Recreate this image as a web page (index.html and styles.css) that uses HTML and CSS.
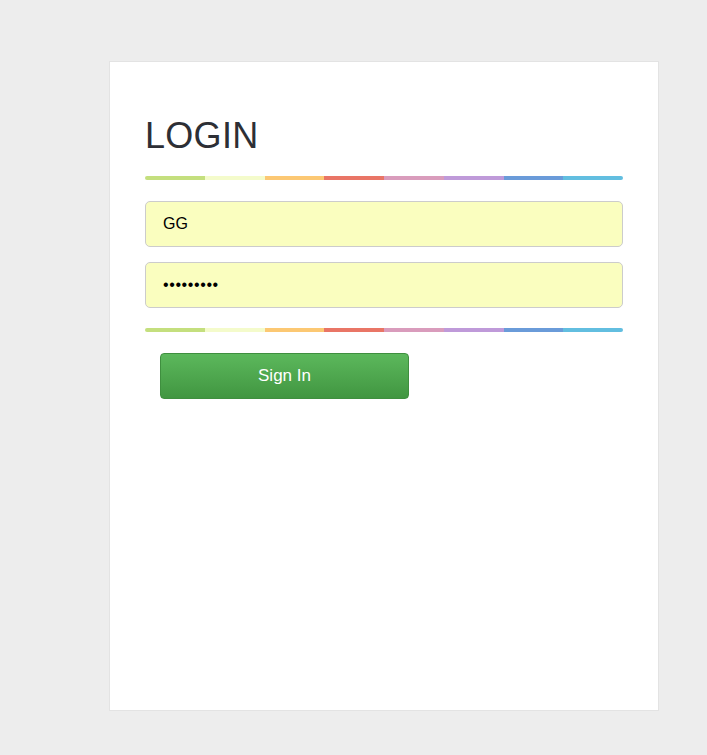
FILE: index.html
```html
<!DOCTYPE html>
<html>
<head>
<meta charset="utf-8">
<link rel="stylesheet" href="styles.css">
</head>
<body>
<div class="page">
  <div class="card">
    <h1 class="title">LOGIN</h1>
    <div class="rainbow"><span class="c1"></span><span class="c2"></span><span class="c3"></span><span class="c4"></span><span class="c5"></span><span class="c6"></span><span class="c7"></span><span class="c8"></span></div>
    <form class="form">
      <input class="field" type="text" value="GG">
      <input class="field pass" type="password" value="123456789">
    </form>
    <div class="rainbow"><span class="c1"></span><span class="c2"></span><span class="c3"></span><span class="c4"></span><span class="c5"></span><span class="c6"></span><span class="c7"></span><span class="c8"></span></div>
    <div class="actions">
      <button class="btn" type="button">Sign In</button>
    </div>
  </div>
</div>
</body>
</html>
```
FILE: styles.css
```css
html, body {
  margin: 0;
  padding: 0;
  background: #ededed;
  font-family: "Liberation Sans", Arial, sans-serif;
}
.page {
  padding: 61px 0 0 109px;
}
.card {
  box-sizing: border-box;
  width: 550px;
  height: 650px;
  background: #fff;
  border: 1px solid #e3e3e3;
  padding: 50px 35px 0 35px;
}
.title {
  margin: 0;
  font-size: 36px;
  font-weight: normal;
  color: #2d2f35;
  line-height: 48px;
  letter-spacing: 0.3px;
}
.rainbow {
  display: flex;
  height: 4px;
  border-radius: 2px;
  overflow: hidden;
  margin-top: 16px;
}
.rainbow span { flex: 1; }
.c1 { background: #c4df7e; }
.c2 { background: #f4fbcb; }
.c3 { background: #fcc873; }
.c4 { background: #e97566; }
.c5 { background: #d99cbc; }
.c6 { background: #bf9ad9; }
.c7 { background: #6a9bd9; }
.c8 { background: #62bee0; }
.form {
  display: flex;
  flex-direction: column;
  gap: 15px;
  margin: 0 0 20px 0;
}
.rainbow + .form { margin-top: 21px; }
.field {
  box-sizing: border-box;
  width: 100%;
  height: 46px;
  margin: 0;
  border: 1px solid #cccccc;
  border-radius: 5px;
  background: #fafebf;
  padding: 0 17px;
  font-family: "Liberation Sans", Arial, sans-serif;
  font-size: 16px;
  color: #000;
  outline: none;
}
.pass {
  letter-spacing: 0.6px;
}
.form + .rainbow { margin-top: 20px; }
.actions {
  padding: 21px 0 0 15px;
}
.btn {
  width: 249px;
  height: 46px;
  border: 1px solid #3f8f3f;
  border-radius: 4px;
  background: linear-gradient(to bottom, #5cb85c, #419641);
  color: #fff;
  font-family: "Liberation Sans", Arial, sans-serif;
  font-size: 17px;
  padding: 0;
  cursor: pointer;
}
```
